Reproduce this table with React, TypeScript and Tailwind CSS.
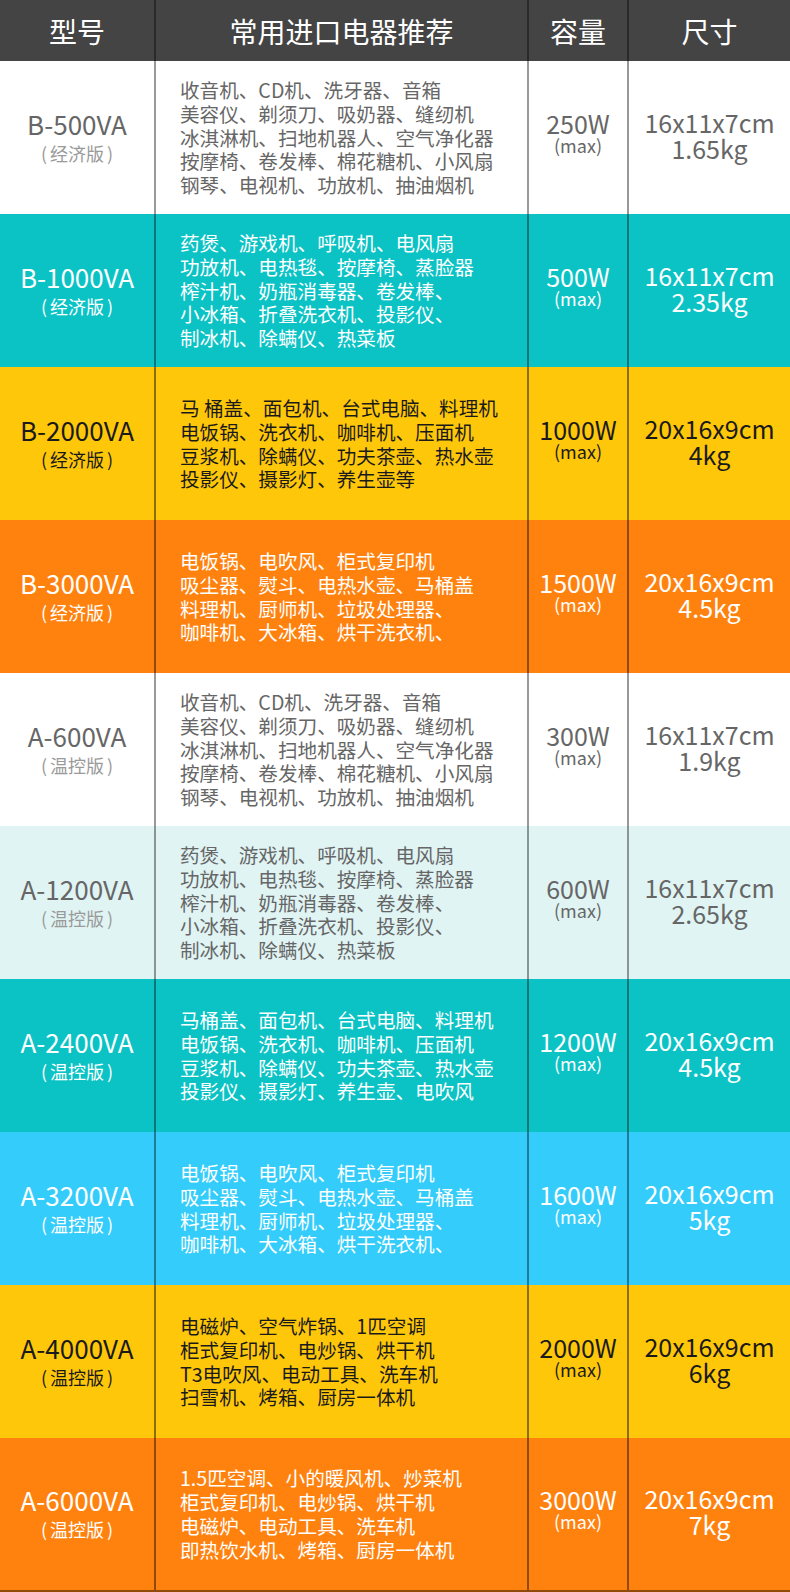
import React from 'react';

type Row = {
  model: string;
  edition: string;
  items: string[];
  watt: string;
  size: string;
  weight: string;
  bg: string;
  main: string;
  sub: string;
  line: string;
};

const SET_A = [
  '收音机、CD机、洗牙器、音箱',
  '美容仪、剃须刀、吸奶器、缝纫机',
  '冰淇淋机、扫地机器人、空气净化器',
  '按摩椅、卷发棒、棉花糖机、小风扇',
  '钢琴、电视机、功放机、抽油烟机',
];

const SET_B = [
  '药煲、游戏机、呼吸机、电风扇',
  '功放机、电热毯、按摩椅、蒸脸器',
  '榨汁机、奶瓶消毒器、卷发棒、',
  '小冰箱、折叠洗衣机、投影仪、',
  '制冰机、除螨仪、热菜板',
];

const SET_D = [
  '电饭锅、电吹风、柜式复印机',
  '吸尘器、熨斗、电热水壶、马桶盖',
  '料理机、厨师机、垃圾处理器、',
  '咖啡机、大冰箱、烘干洗衣机、',
];

// colour presets per row type
const WHITE = { bg: 'bg-white', main: 'text-[#666666]', sub: 'text-[#9a9a9a]', line: 'border-[#999999]' };
const TEAL = { bg: 'bg-[#0bc3c5]', main: 'text-white', sub: 'text-white', line: 'border-[#0a7677]' };
const YELLOW = { bg: 'bg-[#ffc709]', main: 'text-[#1a1a1a]', sub: 'text-[#1a1a1a]', line: 'border-[#8c6e08]' };
const ORANGE = { bg: 'bg-[#ff820f]', main: 'text-white', sub: 'text-white', line: 'border-[#8f4a0c]' };
const PALE = { bg: 'bg-[#e0f4f4]', main: 'text-[#666666]', sub: 'text-[#9a9a9a]', line: 'border-[#8a9595]' };
const SKY = { bg: 'bg-[#34cdfb]', main: 'text-white', sub: 'text-white', line: 'border-[#1f7b97]' };

const rows: Row[] = [
  { model: 'B-500VA', edition: '经济版', items: SET_A, watt: '250W', size: '16x11x7cm', weight: '1.65kg', ...WHITE },
  { model: 'B-1000VA', edition: '经济版', items: SET_B, watt: '500W', size: '16x11x7cm', weight: '2.35kg', ...TEAL },
  {
    model: 'B-2000VA',
    edition: '经济版',
    items: ['马 桶盖、面包机、台式电脑、料理机', '电饭锅、洗衣机、咖啡机、压面机', '豆浆机、除螨仪、功夫茶壶、热水壶', '投影仪、摄影灯、养生壶等'],
    watt: '1000W',
    size: '20x16x9cm',
    weight: '4kg',
    ...YELLOW,
  },
  { model: 'B-3000VA', edition: '经济版', items: SET_D, watt: '1500W', size: '20x16x9cm', weight: '4.5kg', ...ORANGE },
  { model: 'A-600VA', edition: '温控版', items: SET_A, watt: '300W', size: '16x11x7cm', weight: '1.9kg', ...WHITE },
  { model: 'A-1200VA', edition: '温控版', items: SET_B, watt: '600W', size: '16x11x7cm', weight: '2.65kg', ...PALE },
  {
    model: 'A-2400VA',
    edition: '温控版',
    items: ['马桶盖、面包机、台式电脑、料理机', '电饭锅、洗衣机、咖啡机、压面机', '豆浆机、除螨仪、功夫茶壶、热水壶', '投影仪、摄影灯、养生壶、电吹风'],
    watt: '1200W',
    size: '20x16x9cm',
    weight: '4.5kg',
    ...TEAL,
  },
  { model: 'A-3200VA', edition: '温控版', items: SET_D, watt: '1600W', size: '20x16x9cm', weight: '5kg', ...SKY },
  {
    model: 'A-4000VA',
    edition: '温控版',
    items: ['电磁炉、空气炸锅、1匹空调', '柜式复印机、电炒锅、烘干机', 'T3电吹风、电动工具、洗车机', '扫雪机、烤箱、厨房一体机'],
    watt: '2000W',
    size: '20x16x9cm',
    weight: '6kg',
    ...YELLOW,
  },
  {
    model: 'A-6000VA',
    edition: '温控版',
    items: ['1.5匹空调、小的暖风机、炒菜机', '柜式复印机、电炒锅、烘干机', '电磁炉、电动工具、洗车机', '即热饮水机、烤箱、厨房一体机'],
    watt: '3000W',
    size: '20x16x9cm',
    weight: '7kg',
    ...ORANGE,
  },
];

const font = { fontFamily: '"Noto Sans CJK SC", "Noto Sans", sans-serif' };

export default function App() {
  return (
    <div className="w-[790px] bg-white" style={font}>
      {/* header */}
      <div className="flex h-[61px] bg-[#444444] text-white text-[28px] leading-none">
        <div className="w-[156px] flex items-center justify-center border-r-2 border-[#2a2a2a]">型号</div>
        <div className="w-[373px] flex items-center justify-center border-r-2 border-[#2a2a2a]">常用进口电器推荐</div>
        <div className="w-[100px] flex items-center justify-center border-r-2 border-[#2a2a2a]">容量</div>
        <div className="flex-1 flex items-center justify-center">尺寸</div>
      </div>

      {rows.map((r, i) => (
        <div
          key={r.model}
          className={`flex ${i === rows.length - 1 ? 'h-[154px] border-b-2 border-[#8f4a0c]' : 'h-[153px]'} ${r.bg}`}
        >
          <div className={`w-[156px] flex flex-col items-center justify-center border-r-2 ${r.line}`}>
            <div className={`text-[26px] leading-[30px] ${r.main}`}>{r.model}</div>
            <div className={`flex items-center text-[18px] leading-[28px] ${r.sub}`}>
              <span className="mr-[3px]">(</span>
              <span>{r.edition}</span>
              <span className="ml-[3px]">)</span>
            </div>
          </div>
          <div className={`w-[373px] flex flex-col justify-center pl-[24px] border-r-2 ${r.line}`}>
            {r.items.map((t) => (
              <div key={t} className={`text-[19.6px] leading-[23.8px] whitespace-nowrap ${r.main}`}>
                {t}
              </div>
            ))}
          </div>
          <div className={`w-[100px] flex flex-col items-center justify-center pb-[10px] border-r-2 ${r.line} ${r.main}`}>
            <div className="text-[25px] leading-[24px]">{r.watt}</div>
            <div className="text-[18px] leading-[20px]">(max)</div>
          </div>
          <div className={`flex-1 flex flex-col items-center justify-center pb-[6px] ${r.main}`}>
            <div className="text-[25px] leading-[26px]">{r.size}</div>
            <div className="text-[25px] leading-[26px]">{r.weight}</div>
          </div>
        </div>
      ))}
    </div>
  );
}
